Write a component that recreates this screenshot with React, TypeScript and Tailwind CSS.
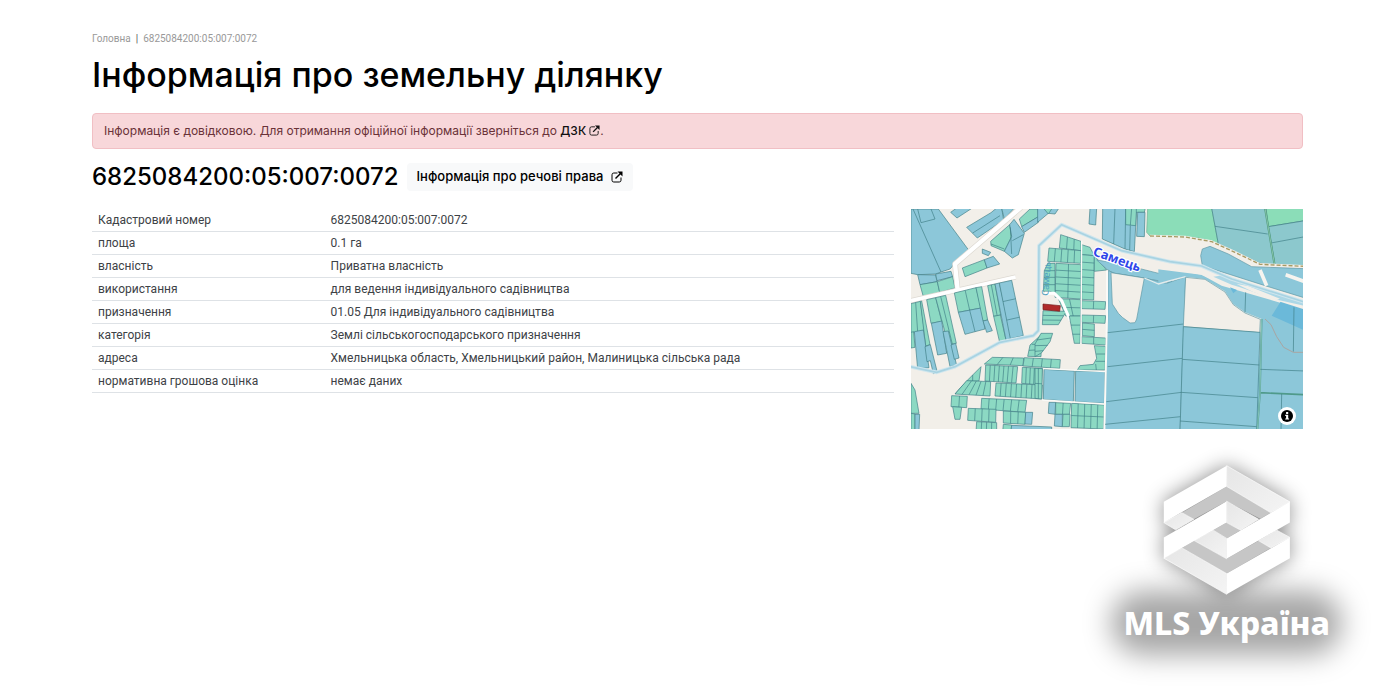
type Pt = [number, number]

const BLUE = "#8cc7d9"
const GREEN = "#8cd9c3"
const LAND = "#f2efe9"
const LINE = "#3f7f86"

const rows = [
  { label: "Кадастровий номер", value: "6825084200:05:007:0072" },
  { label: "площа", value: "0.1 га" },
  { label: "власність", value: "Приватна власність" },
  { label: "використання", value: "для ведення індивідуального садівництва" },
  { label: "призначення", value: "01.05 Для індивідуального садівництва" },
  { label: "категорія", value: "Землі сільськогосподарського призначення" },
  { label: "адреса", value: "Хмельницька область, Хмельницький район, Малиницька сільська рада" },
  { label: "нормативна грошова оцінка", value: "немає даних" },
]

const ExternalIcon = ({ className }: { className: string }) => (
  <svg viewBox="0 0 24 24" fill="none" stroke="currentColor" className={className} aria-hidden="true">
    <path d="M13 4H5.500Q2 4 2 7.500V18.500Q2 22 5.500 22H16.500Q20 22 20 18.500V13" strokeWidth="2" />
    <path d="M9 15L19 5" strokeWidth="3" />
    <path d="M13 1H23V11Z" fill="currentColor" stroke="none" />
  </svg>
)

const Poly = ({ p, fill = BLUE, stroke = LINE }: { p: string; fill?: string; stroke?: string }) => (
  <polygon points={p} fill={fill} stroke={stroke} strokeWidth="2" />
)

const Line = ({ d, stroke = LINE, w = 2, dash }: { d: string; stroke?: string; w?: number; dash?: string }) => (
  <path d={d} fill="none" stroke={stroke} strokeWidth={w} strokeDasharray={dash} strokeLinejoin="round" />
)

const mix = (a: Pt, b: Pt, t: number): Pt => [a[0] + (b[0] - a[0]) * t, a[1] + (b[1] - a[1]) * t]

// a block of plots: quad corners go clockwise from the top left
const Plots = ({ q, cols = 1, rows = 1, fill = GREEN }: { q: Pt[]; cols?: number; rows?: number; fill?: string }) => {
  const [a, b, c, d] = q
  const cuts: [Pt, Pt][] = []
  for (let i = 1; i < cols; i++) cuts.push([mix(a, b, i / cols), mix(d, c, i / cols)])
  for (let i = 1; i < rows; i++) cuts.push([mix(a, d, i / rows), mix(b, c, i / rows)])
  return (
    <g stroke={LINE} strokeWidth="2">
      <polygon points={q.join(" ")} fill={fill} />
      {cuts.map(([s, e], i) => (
        <path key={i} d={`M${s}L${e}`} />
      ))}
    </g>
  )
}

const WestMap = () => (
  <g>
    <Poly p="18,15 100,15 190,137 150,178 135,195 108,204 92,210 38,212 18,208" />
    <Line d="M24 15L108 204M38 15L48 56L90 45L78 15" />
    <Poly p="137,25 155,12 202,12 156,42" />
    <Poly p="185,70 258,26 275,12 290,12 296,48 217,102" />
    <Line d="M203 87L285 35" />
    <Poly p="290,12 328,12 298,45" />
    <Poly p="257,112 314,62 320,98 298,142 258,125" fill={GREEN} />
    <Poly p="314,62 327,46 358,88 340,152 322,162 298,142 320,98" />
    <Line d="M322 110L355 92M258 120L298 135M316 70L320 150" />
    <Poly p="343,45 375,15 398,15 400,38 350,68" fill={GREEN} />
    <Poly p="350,68 400,38 400,55 358,85" />
    <Poly p="172,192 238,167 246,192 180,218" fill={GREEN} />
    <Poly p="238,167 265,157 284,180 246,192" />
    <Poly p="232,135 257,145 250,155 232,148" />
    <Poly p="38,212 92,213 96,233 45,242" />
    <Poly p="92,210 138,202 143,218 96,230" />
    <Poly p="45,242 97,233 104,265 55,278" fill={GREEN} />
    <Poly p="97,233 143,218 150,252 104,265" fill={GREEN} />
    <Line d="M348 10L150 180L158 258" stroke="#ddd9d2" w={17} />
    <Line d="M18 290L332 219" stroke="#ddd9d2" w={15} />
    <Line d="M348 10L150 180L158 258" stroke="#fff" w={13} />
    <Line d="M18 290L332 219" stroke="#fff" w={11} />
    <Plots q={[[18, 299], [46, 292], [58, 380], [18, 388]]} cols={2} />
    <Poly p="18,385 26,383 30,430 18,432" fill={GREEN} />
    <Plots q={[[46, 292], [50, 291], [75, 422], [62, 426]]} />
    <Poly p="28,383 55,378 72,491 38,495" />
    <Poly p="60,428 76,422 97,505 85,509 76,470 66,473" />
    <Plots q={[[65, 287], [92, 281], [110, 352], [78, 358]]} />
    <Plots q={[[92, 281], [122, 274], [154, 418], [130, 422]]} cols={2} />
    <Poly p="79,358 110,351 125,448 98,453" />
    <Poly p="114,383 130,381 155,484 135,488" />
    <Poly p="138,423 152,418 162,462 148,466" />
    <Plots q={[[148, 267], [213, 251], [228, 312], [160, 325]]} cols={2} />
    <Plots q={[[160, 325], [228, 312], [240, 375], [180, 391]]} cols={2} fill={BLUE} />
    <Plots q={[[213, 251], [230, 248], [248, 348], [234, 351]]} />
    <Poly p="234,351 248,348 262,380 245,385" />
    <Plots q={[[248, 245], [270, 240], [287, 333], [266, 337]]} cols={2} />
    <Plots q={[[266, 337], [286, 333], [303, 408], [284, 415]]} />
    <Poly p="270,240 283,237 320,403 303,408" />
    <Plots q={[[283, 237], [320, 229], [355, 395], [316, 404]]} rows={3} fill={BLUE} />
    <Poly p="18,538 30,558 42,628 18,628" fill={GREEN} />
    <Poly p="18,628 30,630 30,680 18,680" fill={GREEN} />
    <Poly p="30,631 44,631 42,680 30,680" />
  </g>
)

const GardenMap = () => (
  <g transform="translate(0 333)">
    <Poly p="410,58 375,90 368,124 408,125" fill={GREEN} />
    <Line d="M380 88H408M372 106L408 104" />
    <Plots q={[[262, 127], [356, 129], [354, 152], [238, 147]]} cols={3} />
    <Plots q={[[358, 128], [466, 134], [464, 160], [354, 153]]} cols={4} />
    <Poly p="150,237 188,195 228,155 222,198 185,199" fill={GREEN} />
    <Line d="M203 180V198" />
    <Plots q={[[185, 197], [257, 200], [255, 243], [150, 237]]} cols={5} />
    <Plots q={[[242, 150], [338, 155], [333, 204], [240, 198]]} cols={7} />
    <Plots q={[[352, 157], [412, 160], [410, 210], [350, 205]]} cols={5} />
    <Plots q={[[273, 204], [412, 210], [410, 252], [270, 243]]} cols={9} />
    <Plots q={[[140, 242], [187, 244], [185, 278], [138, 275]]} cols={2} />
    <Poly p="143,275 170,277 165,313 150,313" fill={GREEN} />
    <Plots q={[[230, 250], [365, 256], [360, 292], [228, 282]]} cols={6} />
    <Plots q={[[190, 280], [273, 283], [272, 322], [188, 316]]} cols={4} />
    <Plots q={[[295, 288], [362, 292], [360, 328], [295, 324]]} cols={3} />
    <Plots q={[[362, 292], [383, 292], [380, 328], [360, 327]]} fill={BLUE} />
    <Plots q={[[215, 320], [275, 323], [275, 350], [213, 350]]} cols={4} />
    <Plots q={[[295, 328], [320, 330], [318, 350], [293, 350]]} />
    <Plots q={[[320, 331], [440, 336], [440, 350], [318, 350]]} fill={BLUE} />
  </g>
)

const CenterMap = () => (
  <g transform="translate(390)">
    <Poly p="8,12 72,12 60,30 40,28 8,55" />
    <Poly p="25,12 52,12 40,30" fill={GREEN} />
    <Poly p="165,12 185,12 182,63 162,60" />
    <Poly p="203,12 305,12 298,143 270,135 202,105" />
    <Line d="M240 12L236 120M272 12L270 135M286 65L284 140" />
    <Poly p="272,12 331,12 328,25 304,25 302,65 272,62" fill={GREEN} />
    <Line d="M290 12L286 64M304 12V25" />
    <Poly p="308,25 330,25 328,98 305,97" />
    <Poly p="338,12 530,12 550,120 490,102 345,96 335,85" fill="#8bddb8" stroke="#6fae92" />
    <Plots q={[[77, 92], [138, 112], [138, 140], [73, 132]]} cols={3} />
    <Plots q={[[42, 132], [138, 140], [137, 178], [38, 172]]} cols={5} />
    <Plots q={[[63, 178], [138, 182], [137, 285], [60, 280]]} cols={2} rows={5} />
    <Poly p="38,178 60,178 60,270 45,262 25,262 28,200" fill={GREEN} />
    <Line d="M28 200H60M27 220H60M26 242H60" />
    <Poly p="140,122 165,130 178,155 140,152" fill={GREEN} />
    <Plots q={[[140, 152], [178, 155], [176, 288], [140, 286]]} rows={6} />
    <Poly p="178,155 215,198 178,202" fill={GREEN} />
    <Plots q={[[140, 290], [212, 293], [210, 316], [140, 314]]} cols={2} />
    <Plots q={[[70, 284], [137, 287], [137, 336], [92, 336]]} cols={2} rows={2} />
    <Plots q={[[24, 320], [94, 322], [70, 362], [22, 362]]} rows={3} />
    <Line d="M30 268L58 268L80 290L106 350" stroke="#fff" w={9} />
    <Poly p="24,300 76,305 74,322 24,317" fill="#b02a2a" stroke="#701818" />
    <Plots q={[[103, 336], [137, 336], [135, 418], [118, 418]]} rows={3} />
    <Plots q={[[140, 333], [212, 335], [210, 358], [140, 355]]} cols={2} />
    <Plots q={[[142, 357], [178, 360], [178, 398], [142, 395]]} rows={2} />
    <Plots q={[[140, 398], [212, 402], [212, 423], [140, 418]]} cols={2} />
    <Poly p="178,425 212,427 210,498 127,498 135,485 175,481 185,463" fill={GREEN} />
    <Line d="M184 450H212M182 472H212M182 480L184 498" />
    <Poly p="18,388 53,388 45,413 20,446 0,458 0,420" fill={GREEN} />
    <Line d="M5 408L48 402M0 425L38 424M0 442L25 440" />
    <Plots q={[[0, 493], [22, 494], [20, 585], [0, 583]]} rows={2} />
    <Line d="M10 494V584" />
    <Poly p="27,496 118,501 115,593 25,586" />
    <Poly p="122,501 210,503 208,598 120,593" />
    <Poly p="42,595 62,595 60,631 40,628" />
    <Plots q={[[62, 596], [107, 598], [103, 631], [62, 631]]} cols={2} />
    <Poly p="60,631 82,631 82,668 58,666" />
    <Plots q={[[84, 631], [105, 631], [103, 668], [82, 668]]} />
    <Plots q={[[110, 598], [208, 603], [206, 675], [108, 671]]} cols={5} rows={2} />
    <Poly p="185,168 260,180 410,218 410,237 300,218 235,208 215,195" stroke="#5d97a5" />
    <Poly p="220,200 240,208 328,222 395,238 452,218 435,680 208,680 218,345" stroke="#5d97a5" />
    <Poly p="228,206 328,222 305,345 300,356 285,357 262,340 250,328 232,300" fill={LAND} stroke="#5d97a5" />
    <Line d="M216 200L216 345L208 680" stroke="#fbfaf7" w={6} />
    <Line d="M218 386L445 360M218 488L442 463M214 593L440 565M210 661L437 638" />
    <Line d="M140 110L138 420M25 494L210 503M22 588L208 600" stroke="#fbfaf7" w={4} />
  </g>
)

const EastMap = () => (
  <g transform="translate(780)">
    <Poly p="140,12 300,12 330,182 285,178 160,120" fill="#8cc8cd" />
    <Line d="M150 67L308 90" />
    <Poly p="303,12 420,12 420,50 310,68" fill="#8bddb8" />
    <Poly p="310,68 420,50 420,185 330,184" fill="#8cc8cd" />
    <Line d="M318 117L420 98" />
    <Line d="M300 12L329 184" stroke="#4f9a7d" w={6} />
    <Line d="M300 12L329 184" stroke="#a0d8c0" w={2} />
    <Poly p="107,155 112,135 135,127 190,150 260,188 420,194 420,282 300,245 112,185" stroke="#5d97a5" />
    <Line d="M285 198L305 245M362 212L420 233" stroke="#f6f4ef" w={11} />
    <Poly p="-20,194 60,203 110,212 170,245 420,318 420,680 270,680 290,345 240,325 205,300 180,262 120,225 62,218 -20,240" stroke="none" />
    <Line d="M62 218L15 230L-20 240L-62 222" stroke="#e4ecec" w={4} />
    <Poly p="350,288 420,310 420,380 320,335" fill="#6bb9d9" stroke="none" />
    <Line d="M242 265L240 325M387 310L385 443" />
    <Poly p="62,220 120,226 180,264 205,302 240,327 286,346 284,386 55,368" fill={LAND} stroke="#5d97a5" />
    <Poly p="55,368 285,385 275,680 45,680" />
    <Line d="M52 466L283 483M48 565L278 581M45 651L275 668" />
    <Line d="M300 345L318 362L335 398L356 430L385 445H420" stroke="#a9a5a2" w={3} />
    <Line d="M290 345L285 567L277 680M284 566L420 572" stroke="#4f9a8a" w={5} />
    <Line d="M290 345L285 567L277 680" stroke="#9ad4cf" w={2} />
    <Line d="M286 496L420 501M350 570L348 680" />
    <Line d="M-20 184L110 200L170 226L420 304" stroke={LAND} w={24} />
    <Poly p="145,218 175,214 240,238 345,268 420,292 420,306 330,286 225,250 200,242" fill="#acd7e6" stroke="none" />
    <Poly p="215,240 250,246 345,284 330,290 260,262" fill={LAND} stroke="none" />
    <Poly p="195,250 216,258 205,268" fill="#6bb9d9" stroke="none" />
    <Line d="M-45 96L60 99L140 113L210 145L285 181L420 187" stroke={LAND} w={8} />
    <Line d="M-45 96L60 99L140 113L210 145L285 181L420 187" stroke="#a89a63" w={4} dash="12 6" />
  </g>
)

const river = "M10 487L95 505L150 488L285 415L385 395L400 380L402 125L470 62L650 140L795 173L890 186L980 225L1200 295"

const ParcelMap = () => (
  <svg viewBox="0 0 1176 660" className="block w-full bg-[#f2efe9]" role="img" aria-label="Карта ділянки">
    <g transform="translate(-18 -15)">
      <WestMap />
      <GardenMap />
      <CenterMap />
      <EastMap />
      <Line d={river} stroke="#cfe6ee" w={11} />
      <Line d={river} stroke="#a8d3e2" w={5} />
      <text
        transform="translate(562 153) rotate(20)"
        className="fill-[#2f46ea] stroke-white font-['Noto_Sans'] text-[38px] font-bold [paint-order:stroke] [stroke-width:7px]"
      >
        Самець
      </text>
      <text transform="translate(430 276) rotate(-86)" className="fill-[#4f9fc0] font-['Noto_Sans'] text-[28px]">
        Самець
      </text>
    </g>
  </svg>
)

const LogoMark = () => (
  <svg
    viewBox="245 60 388 395"
    className="h-[130px] w-32 overflow-visible drop-shadow-[0_0_10px_rgba(0,0,0,0.45)]"
    aria-hidden="true"
  >
    <defs>
      <linearGradient id="fold" x1="0" y1="0" x2="1" y2="1">
        <stop offset="0" stopColor="#e6e6e6" />
        <stop offset="1" stopColor="#f4f4f4" />
      </linearGradient>
    </defs>
    <g fill="#c6c6c6">
      <path d="M302 205L438 125L572 205L540 223L438 170L338 225Z" />
      <path d="M397 258L438 235L480 258L438 283Z" />
      <path d="M302 312L340 290L438 345L535 290L572 312L438 390Z" />
    </g>
    <g fill="url(#fold)" stroke="#fff" strokeWidth="2">
      <path d="M438 62L630 172L572 205L438 125Z" />
      <path d="M247 235L302 205L338 225L283 257Z" />
      <path d="M438 170L535 225L480 258L438 235Z" />
      <path d="M397 258L438 283V345L340 290Z" />
      <path d="M590 258L630 280L572 312L535 290Z" />
      <path d="M247 343L302 312L438 390V453Z" />
    </g>
    <g fill="#fff">
      <path d="M247 172L438 62V125L247 235Z" />
      <path d="M247 280L438 170V235L247 343Z" />
      <path d="M438 283L630 172V235L438 345Z" />
      <path d="M438 390L630 280V343L438 453Z" />
    </g>
  </svg>
)

const Watermark = () => (
  <div className="mt-9 flex justify-end pr-[70px]">
    <div className="relative flex flex-col items-center">
      <div className="absolute -inset-x-3 -bottom-3 h-16 rounded-full bg-black/35 blur-[14px]" />
      <div className="relative">
        <LogoMark />
      </div>
      <p className="relative mt-2 font-['Noto_Sans',sans-serif] text-[32px] leading-10 font-extrabold text-white">
        MLS Україна
      </p>
    </div>
  </div>
)

export default function App() {
  return (
    <div className="min-h-screen overflow-hidden bg-white font-['Roboto',sans-serif] text-xs text-[#3d4246]">
      <main className="pt-[31px] pr-[97px] pl-[92px]">
        <nav className="flex gap-[5px] text-[10px] leading-4 text-[#999]">
          <a href="#home">Головна</a>
          <span className="text-[#555]">|</span>
          <span>6825084200:05:007:0072</span>
        </nav>
        <h1 className="mt-2 font-['Inter',sans-serif] text-[34px] leading-10 font-medium text-black">
          Інформація про земельну ділянку
        </h1>
        <div className="mt-[18px] rounded border border-[#f1bfc4] bg-[#f8d7da] px-[11px] py-2 font-['Inter',sans-serif] leading-[18px] text-[#6a3238]">
          Інформація є довідковою. Для отримання офіційної інформації зверніться до{" "}
          <a href="#dzk" className="font-medium text-[#111]">
            ДЗК <ExternalIcon className="inline size-[11px] align-[-1px]" />
          </a>
          .
        </div>
        <div className="mt-3.5 flex items-center gap-2 font-['Inter',sans-serif] font-medium text-black">
          <h2 className="text-2xl leading-7">6825084200:05:007:0072</h2>
          <button className="flex h-7 items-center gap-2 rounded bg-[#f8f9fa] px-2.5 text-[13px]">
            Інформація про речові права
            <ExternalIcon className="size-3" />
          </button>
        </div>
        <div className="mt-[18px] grid grid-cols-[1fr_392px] items-start gap-[17px]">
          <table className="w-full table-fixed border-collapse text-left">
            <tbody>
              {rows.map((r) => (
                <tr key={r.label} className="border-b border-[#dee2e6]">
                  <th scope="row" className="w-[29%] px-1.5 py-[3px] leading-4 font-normal">
                    {r.label}
                  </th>
                  <td className="px-1.5 leading-4">{r.value}</td>
                </tr>
              ))}
            </tbody>
          </table>
          <div className="relative">
            <ParcelMap />
            <button
              aria-label="Про карту"
              className="absolute right-[7px] bottom-1 flex size-[18px] items-center justify-center rounded-full bg-white"
            >
              <svg viewBox="0 0 20 20" className="size-3" aria-hidden="true">
                <circle cx="10" cy="10" r="10" fill="#000" />
                <path d="M8.500 3.500h3.500v3H8.500zM7 8h5v6h1.500v2H7v-2h1.500v-4H7z" fill="#fff" />
              </svg>
            </button>
          </div>
        </div>
      </main>
      <Watermark />
    </div>
  )
}
